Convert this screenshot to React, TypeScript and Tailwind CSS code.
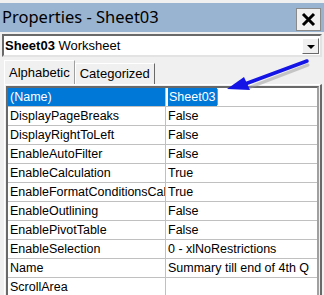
import React from "react";

const rows: [string, string][] = [
  ["(Name)", "Sheet03"],
  ["DisplayPageBreaks", "False"],
  ["DisplayRightToLeft", "False"],
  ["EnableAutoFilter", "False"],
  ["EnableCalculation", "True"],
  ["EnableFormatConditionsCal", "True"],
  ["EnableOutlining", "False"],
  ["EnablePivotTable", "False"],
  ["EnableSelection", "0 - xlNoRestrictions"],
  ["Name", "Summary till end of 4th Q"],
  ["ScrollArea", ""],
];

function Arrow() {
  return (
    <svg
      className="absolute left-0 top-0 pointer-events-none"
      width="324"
      height="295"
      viewBox="0 0 324 295"
    >
      <line x1="247" y1="85" x2="307" y2="62" stroke="#9a9a9a" strokeWidth="3" strokeLinecap="round" opacity="0.5" transform="translate(1,3)" />
      <line x1="245" y1="84" x2="307" y2="61" stroke="#1414e6" strokeWidth="3.5" strokeLinecap="round" />
      <polygon points="227,89 244,77 250,90" fill="#1414e6" />
    </svg>
  );
}

export default function App() {
  return (
    <div
      className="relative w-[324px] h-[295px] overflow-hidden bg-[#f0f0f0] pt-[3px]"
      style={{ fontFamily: '"Liberation Sans", Arial, sans-serif' }}
    >
      {/* title bar */}
      <div className="h-[29px] bg-[#99b4d1] flex items-center justify-between pl-[2px] pr-[3px]">
        <span className="text-[16.5px] text-black" style={{ fontFamily: '"Noto Sans", sans-serif' }}>
          Properties - Sheet03
        </span>
        <div className="w-[25px] h-[23px] mt-[4px] bg-[#f0f0f0] border border-[#8a8a8a] flex items-center justify-center">
          <svg width="15" height="15" viewBox="0 0 15 15">
            <path d="M2 2 L13 13 M13 2 L2 13" stroke="#000" strokeWidth="3" />
          </svg>
        </div>
      </div>

      {/* object dropdown */}
      <div className="mx-[2px] mt-[2px] h-[23px] bg-white border-2 border-t-[#696969] border-l-[#696969] border-r-[#e3e3e3] border-b-[#e3e3e3] flex items-center justify-between pl-[1px] pr-[1px]">
        <span className="text-[13px] text-black leading-none">
          <b>Sheet03</b> Worksheet
        </span>
        <div className="w-[17px] h-[16px] bg-[#f0f0f0] border border-t-white border-l-white border-r-[#696969] border-b-[#696969] flex items-center justify-center">
          <div className="w-0 h-0 border-l-[4px] border-r-[4px] border-t-[4px] border-l-transparent border-r-transparent border-t-black mt-[2px]" />
        </div>
      </div>

      {/* tabs */}
      <div className="flex items-end h-[27px] pl-[4px]">
        <div className="h-[24px] px-[4px] bg-[#f0f0f0] border border-b-0 border-t-white border-l-white border-r-[#a0a0a0] text-[13px] text-black flex items-center">
          Alphabetic
        </div>
        <div className="h-[21px] px-[4px] border border-b-0 border-t-white border-l-white border-r-[#696969] text-[13px] text-black flex items-center">
          Categorized
        </div>
      </div>

      {/* property grid */}
      <div className="ml-[4px] mr-[2px] h-[220px] border-t border-t-white border-l border-l-white border-r-2 border-r-[#696969] pl-px pr-px pt-px">
        <div className="h-full border-2 border-t-[#696969] border-l-[#696969] border-r-[#a0a0a0] border-b-0 bg-white">
          {rows.map(([k, v], i) => (
            <div key={k} className="flex h-[19px] border-b border-[#c0c0c0] text-[12.5px] leading-[18px]">
              <div
                className={
                  "w-[158px] shrink-0 pl-[2px] overflow-hidden whitespace-nowrap border-r border-[#c0c0c0] " +
                  (i === 0 ? "bg-[#0078d7] text-white" : "text-black")
                }
              >
                {k}
              </div>
              <div className="flex-1 pl-[2px] overflow-hidden whitespace-nowrap text-black">
                {i === 0 ? (
                  <span className="inline-flex items-center">
                    <span className="bg-[#0078d7] text-white px-px">{v}</span>
                    <span className="w-px h-[16px] bg-[#f07820]" />
                  </span>
                ) : (
                  v
                )}
              </div>
            </div>
          ))}
        </div>
      </div>

      <Arrow />
    </div>
  );
}
